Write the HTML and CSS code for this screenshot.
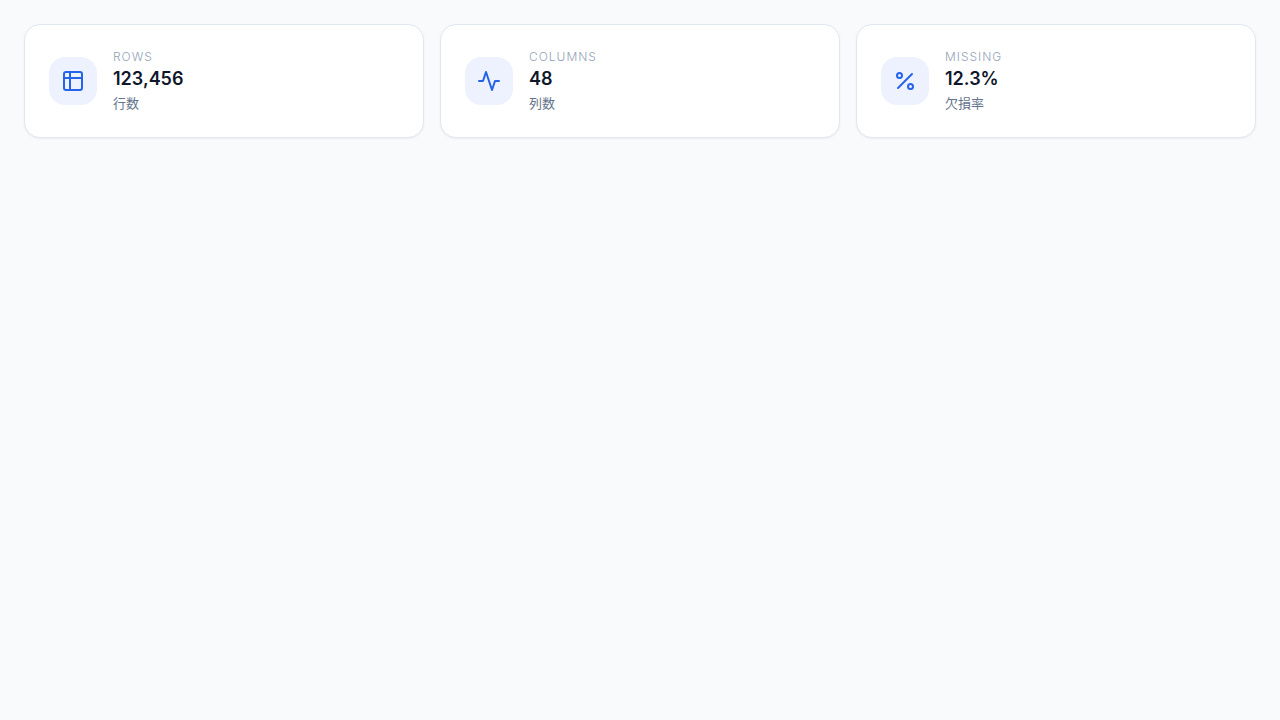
FILE: index.html
```html
<!DOCTYPE html>
<html lang="ja">
<head>
<meta charset="utf-8">
<meta name="viewport" content="width=device-width, initial-scale=1">
<title>Dataset summary</title>
<link rel="stylesheet" href="styles.css">
</head>
<body>
<main class="stats">
  <section class="card">
    <div class="icon">
      <svg viewBox="0 0 24 24" aria-hidden="true"><rect x="3" y="3" width="18" height="18" rx="2"/><path d="M3 9h18M9 3v18"/></svg>
    </div>
    <div class="text">
      <div class="label">Rows</div>
      <div class="value">123,456</div>
      <div class="note">行数</div>
    </div>
  </section>
  <section class="card">
    <div class="icon">
      <svg viewBox="0 0 24 24" aria-hidden="true"><path d="M22 12h-4l-3 9L9 3l-3 9H2"/></svg>
    </div>
    <div class="text">
      <div class="label">Columns</div>
      <div class="value">48</div>
      <div class="note">列数</div>
    </div>
  </section>
  <section class="card">
    <div class="icon">
      <svg viewBox="0 0 24 24" aria-hidden="true"><path d="M19 5 5 19"/><circle cx="6.5" cy="6.5" r="2.5"/><circle cx="17.5" cy="17.5" r="2.5"/></svg>
    </div>
    <div class="text">
      <div class="label">Missing</div>
      <div class="value">12.3%</div>
      <div class="note">欠損率</div>
    </div>
  </section>
</main>
</body>
</html>
```

FILE: styles.css
```css
* {
  box-sizing: border-box;
}

body {
  margin: 0;
  background: #f8fafc;
  color: #0f172a;
  font-family: Inter, "Noto Sans CJK JP", sans-serif;
}

.stats {
  display: grid;
  grid-template-columns: repeat(3, 1fr);
  gap: 16px;
  padding: 24px;
}

.card {
  display: flex;
  align-items: center;
  gap: 16px;
  padding: 24px;
  background: #fff;
  border: 1px solid #e2e8f0;
  border-radius: 16px;
  box-shadow: 0 1px 2px rgba(15, 23, 42, 0.06);
}

.icon {
  display: grid;
  place-items: center;
  width: 48px;
  height: 48px;
  border-radius: 16px;
  background: #eef2ff;
  color: #2563eb;
}

.icon svg {
  width: 24px;
  height: 24px;
  fill: none;
  stroke: currentColor;
  stroke-width: 2;
  stroke-linecap: round;
  stroke-linejoin: round;
}

.label {
  font-size: 12px;
  line-height: 16px;
  font-weight: 300;
  letter-spacing: 1px;
  text-transform: uppercase;
  color: #94a3b8;
}

.value {
  font-size: 18px;
  line-height: 28px;
  font-weight: 600;
}

.note {
  font-size: 13px;
  line-height: 20px;
  color: #64748b;
}
```
